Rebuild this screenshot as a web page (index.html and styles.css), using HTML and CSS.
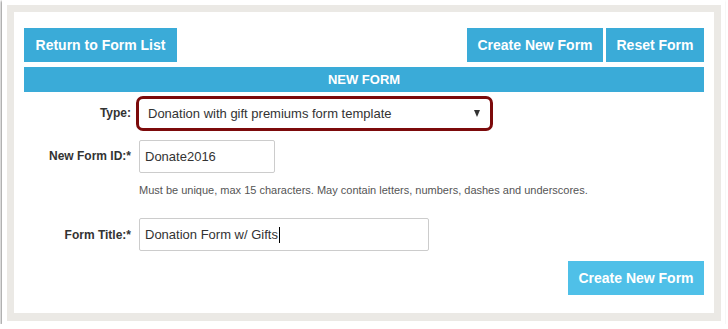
FILE: index.html
```html
<!DOCTYPE html>
<html>
<head>
<meta charset="utf-8">
<link rel="stylesheet" href="styles.css">
</head>
<body>
<div class="card">
  <div class="frame">
    <div class="toolbar">
      <a class="btn">Return to Form List</a>
      <div class="btn-group">
        <a class="btn">Create New Form</a>
        <a class="btn">Reset Form</a>
      </div>
    </div>
    <div class="section-title">NEW FORM</div>
    <div class="form">
      <label class="lbl row-type">Type:</label>
      <div class="select-hl row-type">
        <div class="select">
          <span>Donation with gift premiums form template</span>
          <span class="caret"></span>
        </div>
      </div>
      <label class="lbl row-id">New Form ID:*</label>
      <div class="input w-id row-id">Donate2016</div>
      <div class="help">Must be unique, max 15 characters. May contain letters, numbers, dashes and underscores.</div>
      <label class="lbl row-title">Form Title:*</label>
      <div class="input w-title row-title">Donation Form w/ Gifts<span class="cursor"></span></div>
    </div>
    <div class="actions">
      <a class="btn btn-light">Create New Form</a>
    </div>
  </div>
</div>
</body>
</html>
```
FILE: styles.css
```css
html, body {
  margin: 0;
  padding: 0;
  background: #ffffff;
}
body {
  font-family: "Liberation Sans", Arial, sans-serif;
  color: #333333;
}
.card {
  margin: 0 3px 0 2px;
  padding: 5px 4px 3px 5px;
  height: 316px;
  background: #ffffff;
  box-shadow: -1px 1px 2px rgba(0, 0, 0, 0.45);
}
.frame {
  border: 7px solid #ebe9e5;
  border-bottom-width: 8px;
  background: #ffffff;
  padding: 16px 10px 18px 10px;
  height: 301px;
  box-sizing: content-box;
  height: 267px;
}
.toolbar {
  display: flex;
  justify-content: space-between;
  height: 34px;
}
.btn-group {
  display: flex;
  gap: 3px;
}
.btn {
  display: flex;
  align-items: center;
  justify-content: center;
  height: 34px;
  padding: 0 10px;
  background: #3aabd8;
  color: #ffffff;
  font-weight: bold;
  font-size: 14px;
  box-sizing: border-box;
}
.btn-group .btn:first-child { width: 136px; }
.btn-group .btn:last-child { width: 98px; }
.toolbar > .btn { width: 153px; }
.section-title {
  margin-top: 5px;
  height: 25px;
  line-height: 25px;
  background: #3aabd8;
  color: #ffffff;
  font-weight: bold;
  font-size: 13px;
  text-align: center;
}
.form {
  display: grid;
  grid-template-columns: 107px 1fr;
  column-gap: 8px;
  align-items: center;
}
.lbl {
  font-size: 12px;
  font-weight: bold;
  text-align: right;
  color: #333333;
}
.lbl.row-type { margin-top: 2px; }
.row-type { margin-top: 4px; }
.row-id { margin-top: 9px; }
.row-title { margin-top: 21px; }
.lbl.row-id { margin-top: 8px; }
.lbl.row-title { margin-top: 21px; }
.select-hl {
  margin-left: -3px;
  width: 357px;
  height: 35px;
  border: 3px solid #7c0a0b;
  border-radius: 7px;
  box-sizing: border-box;
  background: #ffffff;
}
.select {
  display: flex;
  align-items: center;
  justify-content: space-between;
  height: 100%;
  padding: 0 10px 0 9px;
  font-size: 13px;
  color: #333333;
}
.caret {
  width: 0;
  height: 0;
  border-left: 3.5px solid transparent;
  border-right: 3.5px solid transparent;
  border-top: 7px solid #333333;
}
.input {
  height: 33px;
  border: 1px solid #cccccc;
  border-radius: 2px;
  box-sizing: border-box;
  padding: 0 5px;
  display: flex;
  align-items: center;
  font-size: 13px;
  color: #333333;
}
.w-id { width: 136px; }
.w-title { width: 290px; }
.cursor {
  display: inline-block;
  width: 1px;
  height: 16px;
  background: #000000;
  margin-left: 1px;
}
.help {
  grid-column: 2;
  margin-top: 10px;
  font-size: 11px;
  line-height: 14px;
  color: #555555;
}
.actions {
  display: flex;
  justify-content: flex-end;
  margin-top: 10px;
}
.btn-light {
  background: #4fc0e8;
  width: 136px;
}
```
